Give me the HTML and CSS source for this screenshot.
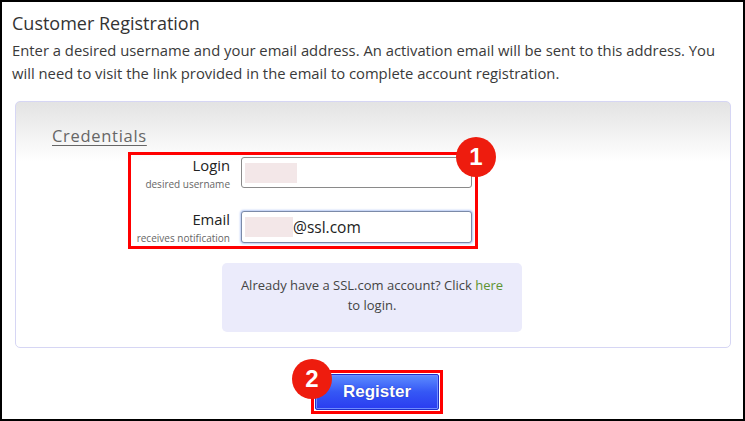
FILE: index.html
```html
<!DOCTYPE html>
<html lang="en">
<head>
   <meta charset="UTF-8">
   <meta name="viewport" content="width=device-width, initial-scale=1.0">
   <title>Customer Registration</title>
   <link rel="stylesheet" href="styles.css">
</head>
<body>
   <div class="page">
      <h1 class="title">Customer Registration</h1>
      <p class="intro">Enter a desired username and your email address. An activation email will be sent to this address. You will need to visit the link provided in the email to complete account registration.</p>

      <div class="panel">
         <div class="legend">Credentials</div>

         <div class="highlight">
            <div class="field">
               <label class="field-label">Login<small>desired username</small></label>
               <div class="input"><span class="blur blur-login"></span></div>
            </div>
            <div class="field">
               <label class="field-label">Email<small>receives notification</small></label>
               <div class="input focused"><span class="blur blur-email"></span><span class="value">@ssl.com</span></div>
            </div>
            <span class="badge badge-one">1</span>
         </div>

         <div class="info">
            Already have a SSL.com account? Click <a href="#">here</a><br>to login.
         </div>
      </div>

      <div class="actions">
         <div class="highlight highlight-btn">
            <button class="register">Register</button>
            <span class="badge badge-two">2</span>
         </div>
      </div>
   </div>
</body>
</html>
```

FILE: styles.css
```css
* {
   box-sizing: border-box;
}
html, body {
   margin: 0;
   height: 100%;
}
body {
   border: 2px solid #000;
   background: #fff;
   font-family: "Open Sans", Lato, sans-serif;
   color: #333;
   overflow: hidden;
}
.page {
   padding: 10px 0 0 0;
}
.title {
   margin: 0 0 0 10px;
   font-size: 18px;
   font-weight: 400;
   line-height: 22px;
   color: #333;
}
.intro {
   margin: 5px 20px 0 10px;
   font-size: 14.8px;
   line-height: 23px;
   color: #3a3a3a;
}
.panel {
   margin: 16px 12px 0 13px;
   height: 247px;
   border: 1px solid #d6d6f4;
   border-radius: 5px;
   background: linear-gradient(#e3e3e3 0, #f6f6f6 40px, #fff 60px);
   padding: 24px 0 0 0;
}
.legend {
   margin-left: 36px;
   font-size: 16.5px;
   color: #666;
   text-decoration: underline;
   text-underline-offset: 3px;
   letter-spacing: 0.7px;
   line-height: 20px;
}
.highlight {
   position: relative;
   display: inline-flex;
   flex-direction: column;
   gap: 21px;
   margin: 6px 0 0 112px;
   border: 3px solid #f00;
   padding: 2px 3px 2px 0;
}
.field {
   display: flex;
   gap: 11px;
}
.field-label {
   width: 99px;
   display: flex;
   flex-direction: column;
   align-items: flex-end;
   font-size: 14.8px;
   line-height: 16px;
   color: #222;
   white-space: nowrap;
}
.field-label small {
   margin-top: 5px;
   font-size: 10px;
   line-height: 12px;
   color: #666;
}
.input {
   width: 231px;
   height: 31px;
   border: 1px solid #8a8a8a;
   border-radius: 3px;
   background: #fff;
   display: flex;
   align-items: center;
   padding-left: 3px;
}
.input.focused {
   height: 32px;
   border-color: #7b8aa8;
   box-shadow: 0 0 2px 1px #b7caf5;
}
.blur {
   display: block;
   height: 20px;
   background: #f3e7e8;
}
.blur-login {
   width: 52px;
}
.blur-email {
   width: 48px;
}
.value {
   font-size: 15.5px;
   color: #222;
}
.badge {
   position: absolute;
   width: 40px;
   height: 40px;
   border-radius: 50%;
   background: #ee1c0e;
   color: #fff;
   font-family: "Liberation Sans", Arial, sans-serif;
   font-weight: 700;
   font-size: 24px;
   line-height: 40px;
   text-align: center;
}
.badge-one {
   right: -21px;
   top: -18px;
}
.info {
   margin: 14px 0 0 206px;
   width: 300px;
   height: 69px;
   border-radius: 5px;
   background: #ebebfb;
   font-size: 13px;
   line-height: 20px;
   color: #444;
   text-align: center;
   padding-top: 12px;
}
.info a {
   color: #5d9330;
   text-decoration: none;
}
.actions {
   padding-top: 16px;
}
.highlight-btn {
   margin-left: 309px;
   padding: 1px;
   border-width: 3px;
}
.register {
   width: 124px;
   height: 36px;
   border: 1px solid #1f2fc9;
   border-radius: 2px;
   background: linear-gradient(#5d8dff, #3557f5 50%, #2a3cf0);
   box-shadow: inset 0 0 0 1px #6f8cff;
   color: #fff;
   font-family: "Liberation Sans", Arial, sans-serif;
   font-weight: 700;
   font-size: 17px;
   text-shadow: 0 0 1px #1a2aa0;
   padding: 0;
}
.badge-two {
   left: -22px;
   top: -14px;
}
```
